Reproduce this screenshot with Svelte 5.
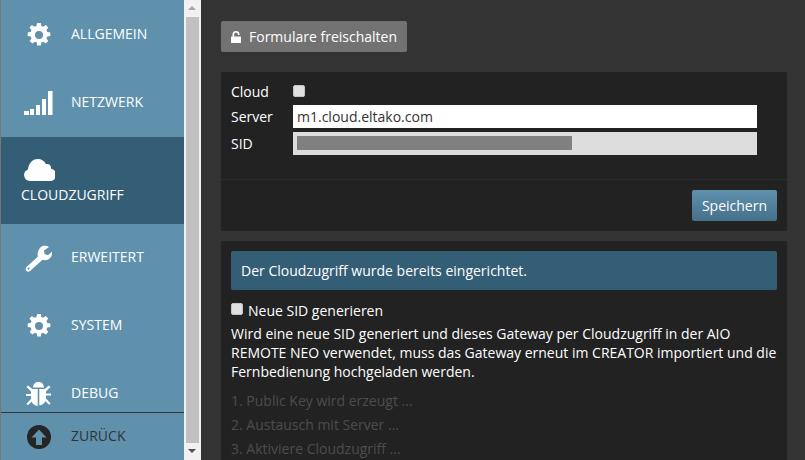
<script>
  const gear = "M11.2 1h3.6l.5 3 1.9.8 2.5-1.8 2.6 2.6-1.8 2.5.8 1.9 3 .5v3.6l-3 .5-.8 1.9 1.8 2.5-2.6 2.6-2.5-1.8-1.9.8-.5 3h-3.600l-.5-3-1.900-.8-2.500 1.800-2.600-2.600 1.800-2.500-.8-1.900-3-.5v-3.600l3-.5.8-1.900L3.400 5.600 6 3l2.500 1.800 1.900-.8zM13 9a4 4 0 1 0 0 8 4 4 0 0 0 0-8z";
</script>

<div class="page">
  <aside class="side">
    <div class="nav">
      <a class="item">
        <svg class="ico gear" viewBox="0 0 26 26" width="26" height="26"><path fill-rule="evenodd" d={gear} /></svg>
        <span>ALLGEMEIN</span>
      </a>
      <a class="item">
        <svg class="ico signal" viewBox="0 0 29 24" width="29" height="24"><path d="M0 20h5v4H0zM6 18h4v6H6zM12 14h4v10h-4zM18 8h4v16h-4zM24 0h4.500v24H24z" /></svg>
        <span>NETZWERK</span>
      </a>
      <a class="item active">
        <svg class="cloud" viewBox="0 0 31 22" width="31" height="22"><path d="M6 22a6 6 0 0 1-2-11.600C4.500 5 8 0 14 0c3.500 0 6.500 2 8 5.200 2.500-1 5.500.8 5 4.500a6.200 6.200 0 0 1-1.500 12.300z" /></svg>
        <span>CLOUDZUGRIFF</span>
      </a>
      <a class="item">
        <svg class="ico wide-ico" viewBox="0 0 27 27" width="27" height="27"><path fill-rule="evenodd" d="M17.500 1c2-.6 5-.3 6.500 1l-5 3.500.5 3.500 3.500 1.200 4-3.700c.5 3.200-.7 6-3 7.500-2 1.300-4.500 1.500-6.500.7L5 26c-1.500 1.200-3.300.7-4-.5-.6-1.100-.4-2.500.5-3.400L13 11.500c-.7-2-.5-4.500.7-6.500.8-1.900 2.300-3.300 3.800-4zM3.500 22.500a1.100 1.100 0 1 0 0 2.200 1.100 1.100 0 0 0 0-2.200z" /></svg>
        <span>ERWEITERT</span>
      </a>
      <a class="item">
        <svg class="ico gear" viewBox="0 0 26 26" width="26" height="26"><path fill-rule="evenodd" d={gear} /></svg>
        <span>SYSTEM</span>
      </a>
      <a class="item">
        <svg class="ico wide-ico" viewBox="0 0 27 26" width="27" height="26"><path d="M8 6.500C8 3 10.500 1 13.500 1S19 3 19 6.500zM7.500 8h5.200v17c-3-.2-5.200-2-6-4.500l-3.700 3.700-1.500-1.500 4.500-4.700v-3H1v-2h5V10.500L1.500 6l1.500-1.500zM14.300 8h5.200l4.500-3.500L25.500 6 21 10.500V12.500h5v2h-5v3l4.500 4.700-1.500 1.500-3.700-3.700c-.8 2.500-3 4.300-6 4.500z" /></svg>
        <span>DEBUG</span>
      </a>
    </div>
    <a class="back">
      <svg class="ico" viewBox="0 0 24 24" width="24" height="24"><circle cx="12" cy="12" r="12" fill="#252525" /><path fill="#5f91ad" d="M12 4.500l7.500 8h-4.500V20H9v-7.500H4.500z" /></svg>
      <span>ZURÜCK</span>
    </a>
  </aside>

  <div class="scrollbar">
    <div class="arrow up"></div>
    <div class="thumb"></div>
    <div class="arrow down"></div>
  </div>

  <main class="main">
    <button class="unlock">
      <svg viewBox="0 0 10 12" width="10" height="12"><path fill="#fff" d="M1.500 5.500V3.200C1.500 1.200 3 0 5 0s3.500 1.200 3.500 3.200V4H6.800v-.8C6.800 2.200 6 1.700 5 1.700s-1.800.5-1.800 1.500v2.300h6.200a.6.600 0 0 1 .6.600v5.300a.6.600 0 0 1-.6.600H.6a.6.600 0 0 1-.6-.6V6.100a.6.600 0 0 1 .6-.6z" /></svg>
      Formulare freischalten
    </button>

    <section class="panel first">
      <div class="form">
        <div class="row check-row">
          <span class="label">Cloud</span>
          <span class="check"></span>
        </div>
        <div class="row">
          <span class="label">Server</span>
          <div class="input">m1.cloud.eltako.com</div>
        </div>
        <div class="row">
          <span class="label">SID</span>
          <div class="input disabled"><div class="mask"></div></div>
        </div>
      </div>
      <div class="footer">
        <button class="save">Speichern</button>
      </div>
    </section>

    <section class="panel second">
      <div class="alert">Der Cloudzugriff wurde bereits eingerichtet.</div>
      <div class="newsid"><span class="check"></span><span>Neue SID generieren</span></div>
      <p class="desc">Wird eine neue SID generiert und dieses Gateway per Cloudzugriff in der AIO REMOTE NEO verwendet, muss das Gateway erneut im CREATOR importiert und die Fernbedienung hochgeladen werden.</p>
      <div class="steps">
        <div>1. Public Key wird erzeugt ...</div>
        <div>2. Austausch mit Server ...</div>
        <div>3. Aktiviere Cloudzugriff ...</div>
      </div>
    </section>
  </main>
</div>

<style>
  :global(body) {
    margin: 0;
    background: #333;
    font-family: "Open Sans", sans-serif;
    font-size: 14px;
    color: #fff;
    overflow: hidden;
  }
  .page {
    display: flex;
    width: 805px;
    height: 460px;
    overflow: hidden;
    border-left: 1px solid #777;
    box-sizing: border-box;
  }
  .side {
    width: 183px;
    flex: none;
    height: 460px;
    background: #5f91ad;
    display: flex;
    flex-direction: column;
  }
  .nav {
    height: 412px;
    box-sizing: border-box;
    padding-top: 1px;
    overflow: hidden;
    flex: none;
  }
  .item {
    display: flex;
    align-items: center;
    height: 68px;
    padding-left: 24px;
    box-sizing: border-box;
    color: #fff;
  }
  .item span { margin: -3px 0 0 20px; }
  .ico {
    fill: #fff;
    flex: none;
    display: block;
  }
  .gear { margin: 0 -1px 0 1px; }
  .signal { margin: 0 -2px 0 -1px; }
  .wide-ico { margin-right: -1px; }
  .active {
    background: #345e75;
    height: 87px;
    flex-direction: column;
    align-items: flex-start;
    justify-content: flex-start;
    padding-left: 20px;
  }
  .item.active span { margin: 4px 0 0; }
  .cloud {
    fill: #fff;
    margin: 22px 0 0 3px;
    display: block;
    flex: none;
  }
  .back {
    flex: 1;
    border-top: 1px solid #333;
    display: flex;
    align-items: center;
    padding: 1px 0 0 26px;
    color: #333;
  }
  .back span { margin: -3px 0 0 20px; }
  .scrollbar {
    width: 17px;
    flex: none;
    background: #f1f1f1;
    height: 460px;
    display: flex;
    flex-direction: column;
  }
  .thumb {
    flex: 1;
    background: #c1c1c1;
    margin: 0 2px;
  }
  .arrow {
    height: 17px;
    flex: none;
    position: relative;
  }
  .arrow::after {
    content: "";
    position: absolute;
    left: 4px;
    top: 6px;
    border-left: 4px solid transparent;
    border-right: 4px solid transparent;
  }
  .up::after { border-bottom: 4px solid #a3a3a3; }
  .down::after { border-top: 4px solid #505050; }
  .main {
    flex: 1;
    background: #333;
    padding: 21px 18px 0 20px;
    min-width: 0;
  }
  button {
    font: inherit;
    color: #fff;
    border: 0;
    border-radius: 2px;
    display: block;
  }
  .unlock {
    background: #727272;
    height: 31px;
    width: 186px;
    padding: 0 0 0 10px;
    display: flex;
    align-items: center;
    gap: 8px;
  }
  .panel {
    background: #222;
    border-radius: 2px;
  }
  .first {
    margin-top: 20px;
    height: 159px;
  }
  .form {
    height: 108px;
    box-sizing: border-box;
    padding-top: 10px;
    border-bottom: 1px solid #2e2e2e;
  }
  .row {
    display: flex;
    align-items: center;
    padding-left: 10px;
    height: 23px;
    margin-bottom: 4px;
  }
  .check-row { height: 19px; margin-bottom: 4px; }
  .label { width: 62px; flex: none; }
  .input {
    width: 464px;
    height: 23px;
    background: #fff;
    color: #333;
    line-height: 23px;
    padding-left: 4px;
    box-sizing: border-box;
  }
  .disabled {
    background: #ddd;
    padding: 4px;
  }
  .mask {
    width: 275px;
    height: 14px;
    background: #808080;
  }
  .check {
    display: block;
    width: 12px;
    height: 12px;
    box-sizing: border-box;
    border: 1px solid #c4c4c4;
    border-radius: 2px;
    background: #e0e0e0;
    flex: none;
  }
  .check-row .check { margin-top: -2px; }
  .footer {
    display: flex;
    justify-content: flex-end;
    padding: 10px 10px 0;
  }
  .save {
    height: 31px;
    width: 85px;
    padding: 0;
    background: linear-gradient(#5f91ad, #44708a);
  }
  .second {
    margin-top: 10px;
    padding: 10px;
    height: 240px;
    box-sizing: border-box;
  }
  .alert {
    height: 39px;
    line-height: 39px;
    padding-left: 10px;
    background: #345e75;
    border-radius: 2px;
  }
  .newsid {
    display: flex;
    align-items: center;
    gap: 5px;
    margin-top: 10px;
    height: 20px;
  }
  .newsid .check { margin-top: -3px; }
  .desc {
    margin: 4px 0 0;
    line-height: 19px;
  }
  .steps {
    margin-top: 8px;
    color: #4d4d4d;
    line-height: 24px;
  }
</style>
